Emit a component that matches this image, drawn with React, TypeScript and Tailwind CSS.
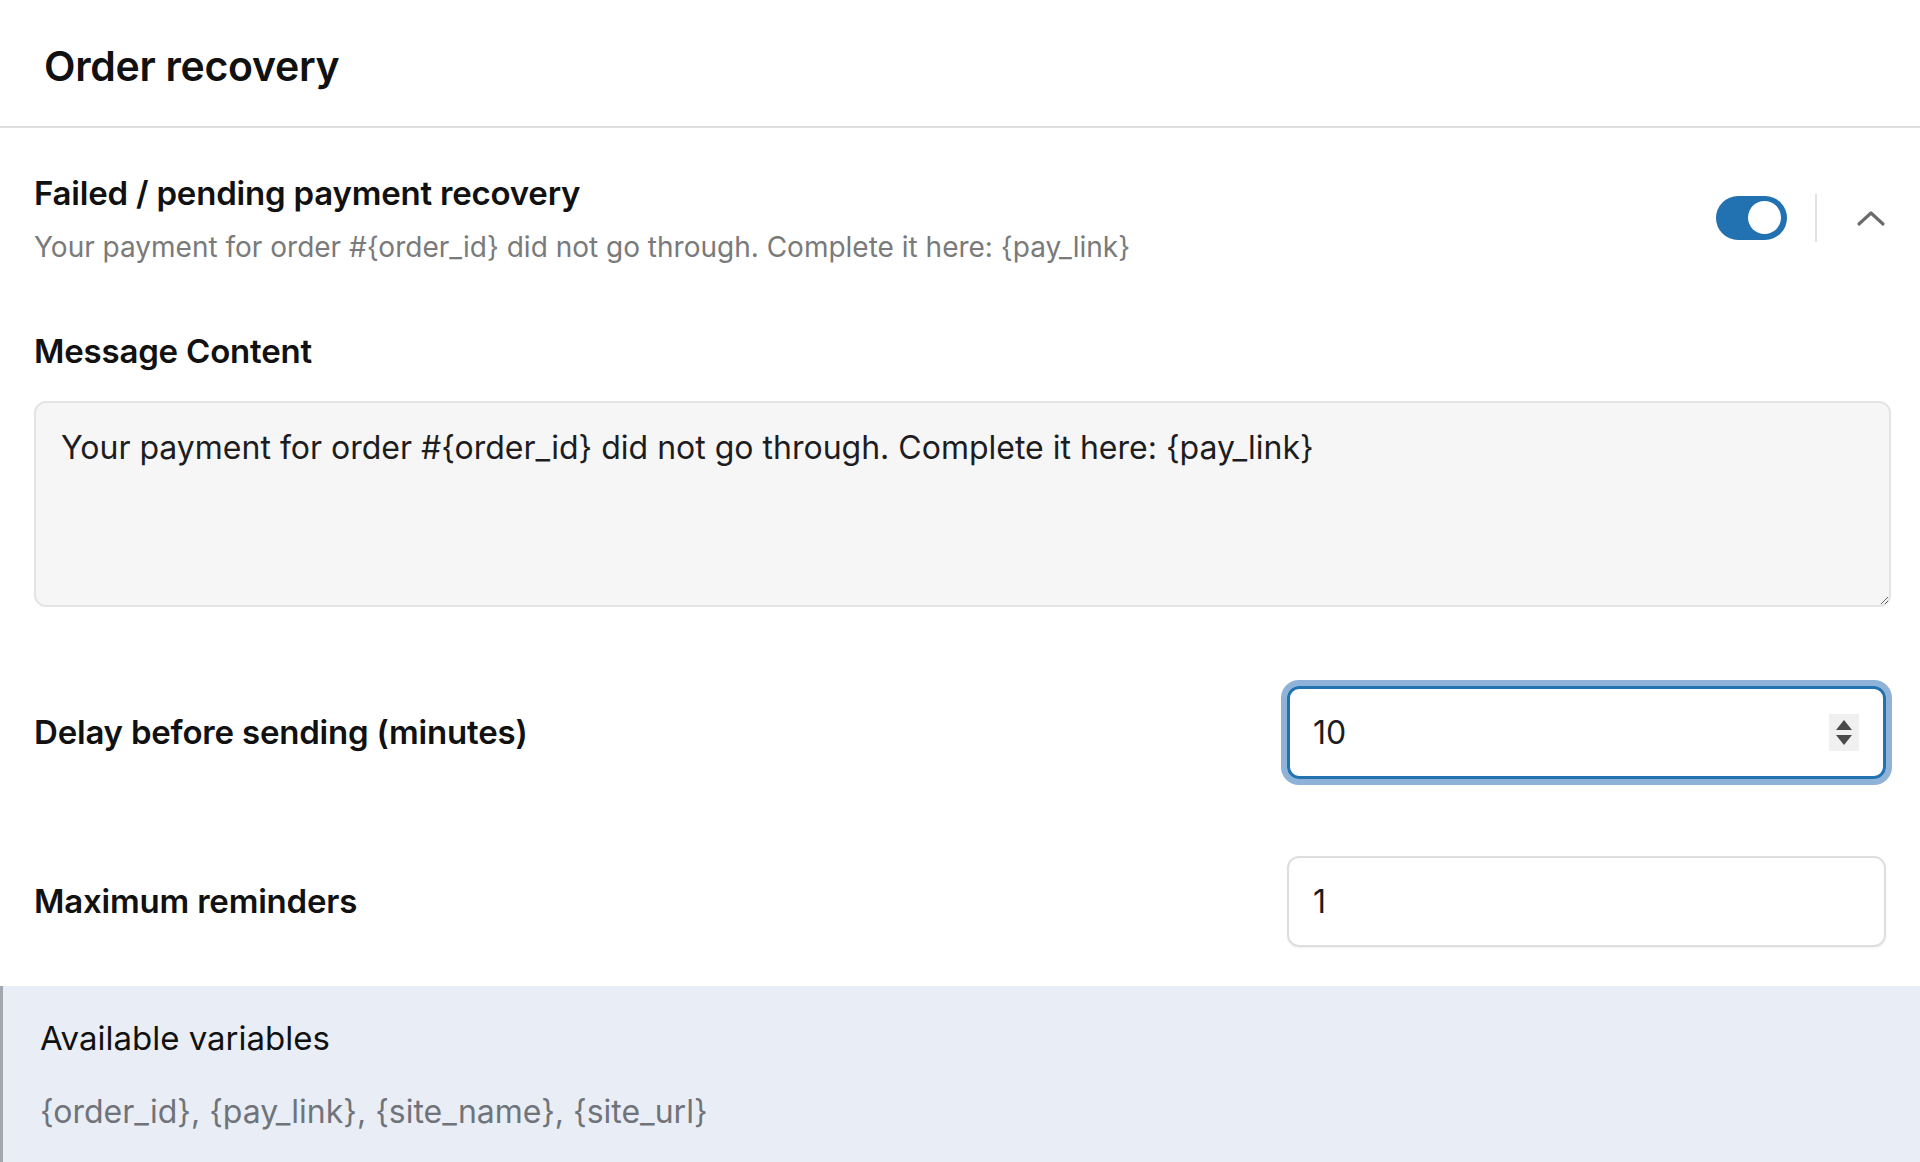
import React from "react";

function Toggle() {
  return (
    <div className="w-[71px] h-[44px] rounded-full bg-[#2271b1] flex items-center justify-end pr-[6px]">
      <div className="w-[33px] h-[33px] rounded-full bg-white" />
    </div>
  );
}

function ChevronUp() {
  return (
    <svg width="30" height="18" viewBox="0 0 30 18" fill="none">
      <path d="M3 15 L15 4 L27 15" stroke="#6b6b6b" strokeWidth="3.2" strokeLinecap="round" strokeLinejoin="round" />
    </svg>
  );
}

function Spinner() {
  return (
    <div className="w-[30px] h-[37px] bg-[#f0f0f0] flex flex-col items-center justify-center gap-[5px]">
      <svg width="16" height="10" viewBox="0 0 16 10"><path d="M8 0 L16 10 L0 10 Z" fill="#4a4a4a" /></svg>
      <svg width="16" height="10" viewBox="0 0 16 10"><path d="M0 0 L16 0 L8 10 Z" fill="#4a4a4a" /></svg>
    </div>
  );
}

export default function App() {
  return (
    <div className="w-[1920px] h-[1162px] bg-white overflow-hidden text-[#1d1d1f]" style={{ fontFamily: "Inter, 'Noto Sans', sans-serif" }}>
      {/* header */}
      <div className="h-[128px] border-b-2 border-[#dedede] flex items-center pl-[44px] pt-[8px]">
        <h1 className="text-[41px] font-semibold tracking-[-0.3px] text-[#111]">Order recovery</h1>
      </div>

      {/* section */}
      <div className="px-[34px]">
        <div className="flex items-center pt-[44px]">
          <div className="flex-1">
            <div className="text-[33px] font-semibold text-[#111] leading-[42px] tracking-[-0.2px]">Failed / pending payment recovery</div>
            <div className="text-[28px] text-[#7a7a7a] leading-[36px] mt-[15px]">
              Your payment for order #{"{order_id}"} did not go through. Complete it here: {"{pay_link}"}
            </div>
          </div>
          <div className="flex items-center mt-[-2px]">
            <Toggle />
            <div className="w-[2px] h-[48px] bg-[#e2e2e2] ml-[28px] mr-[39px]" />
            <ChevronUp />
          </div>
        </div>

        <div className="mt-[65px] text-[33px] font-semibold text-[#111] leading-[42px] tracking-[-0.2px]">Message Content</div>

        <textarea
          className="mt-[29px] block w-[1857px] h-[206px] bg-[#f6f6f6] border-2 border-[#e4e4e4] rounded-[12px] px-[25px] py-[23px] text-[32px] leading-[44px] text-[#1d1d1f] outline-none resize-y"
          defaultValue={"Your payment for order #{order_id} did not go through. Complete it here: {pay_link}"}
        />

        <div className="flex items-center justify-between mt-[79px] h-[93px]">
          <div className="text-[33px] font-semibold text-[#111] tracking-[-0.2px]">Delay before sending (minutes)</div>
          <div className="w-[599px] h-[93px] rounded-[12px] border-[3px] border-[#2271b1] ring-[6px] ring-[#8fb2d8] flex items-center justify-between pl-[23px] pr-[24px]">
            <span className="text-[32px] text-[#1d1d1f]">10</span>
            <Spinner />
          </div>
        </div>

        <div className="flex items-center justify-between mt-[77px] h-[91px]">
          <div className="text-[33px] font-semibold text-[#111] tracking-[-0.2px]">Maximum reminders</div>
          <div className="w-[599px] h-[91px] rounded-[12px] border-2 border-[#dedede] shadow-[0_1px_2px_rgba(0,0,0,0.06)] flex items-center pl-[24px]">
            <span className="text-[32px] text-[#1d1d1f]">1</span>
          </div>
        </div>
      </div>

      {/* variables panel */}
      <div className="mt-[39px] h-[200px] bg-[#e9eef6] border-l-[3px] border-[#a3a8ae] pl-[37px] pt-[32px]">
        <div className="text-[33px] text-[#111] leading-[40px]">Available variables</div>
        <div className="mt-[34px] text-[32px] text-[#70747a] leading-[40px]">{"{order_id}, {pay_link}, {site_name}, {site_url}"}</div>
      </div>
    </div>
  );
}
